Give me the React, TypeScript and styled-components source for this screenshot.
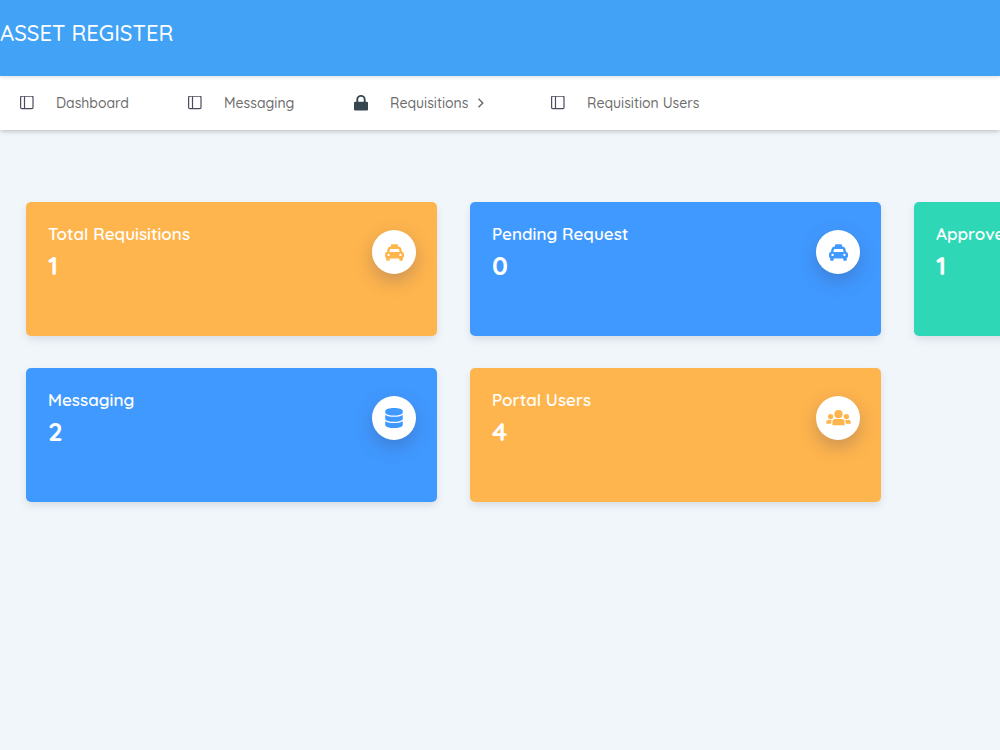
import React from "react";
import styled, { createGlobalStyle } from "styled-components";
import { FaTaxi, FaDatabase } from "react-icons/fa";

const GlobalStyle = createGlobalStyle`
  * { box-sizing: border-box; }
  body {
    margin: 0;
    background: #f1f6fb;
    font-family: Quicksand, Lato, sans-serif;
    font-weight: 500;
    overflow-x: hidden;
  }
`;

const Header = styled.header`
  position: relative;
  z-index: 1;
  height: 76px;
  padding-top: 18px;
  background: #42a3f6;
  color: #ffffff;
  box-shadow: 0 1px 4px rgba(0, 0, 0, 0.14);
`;

const Brand = styled.h1`
  margin: 0;
  font-size: 22px;
  line-height: 30px;
  font-weight: 500;
`;

const Nav = styled.nav`
  display: flex;
  align-items: center;
  height: 54px;
  padding-left: 20px;
  background: #ffffff;
  box-shadow: 0 1px 5px rgba(0, 0, 0, 0.25);
`;

const NavLink = styled.a<{ $width: number }>`
  display: flex;
  flex: none;
  align-items: center;
  width: ${(p) => p.$width}px;
  color: #6c6c6c;
  font-size: 14px;
  line-height: 20px;
  text-decoration: none;
`;

const NavIcon = styled.span`
  display: flex;
  width: 36px;
  color: #4d4c5e;
`;

const Caret = styled.span`
  display: flex;
  margin-left: 9px;
`;

const Cards = styled.main`
  display: grid;
  grid-template-columns: repeat(3, minmax(411px, 1fr));
  gap: 32px 33px;
  padding: 72px 26px;
`;

const Card = styled.section<{ $color: string }>`
  display: flex;
  justify-content: space-between;
  min-height: 134px;
  padding: 22px 21px 22px 22px;
  border-radius: 5px;
  background: ${(p) => p.$color};
  color: #ffffff;
  box-shadow: 0 4px 8px -1px rgba(60, 70, 90, 0.15);
`;

const CardTitle = styled.h2`
  margin: 0;
  font-size: 17px;
  line-height: 20px;
  font-weight: 600;
`;

const CardValue = styled.p`
  margin: 6px 0 0;
  font-size: 26px;
  line-height: 32px;
  font-weight: 700;
`;

const Badge = styled.span<{ $color: string }>`
  display: flex;
  align-items: center;
  justify-content: center;
  width: 44px;
  height: 44px;
  margin-top: 6px;
  border-radius: 50%;
  background: #ffffff;
  color: ${(p) => p.$color};
  box-shadow: 0 7px 18px rgba(62, 57, 107, 0.28);
`;

const PanelIcon = () => (
  <svg width="14" height="14" viewBox="0 0 14 14" fill="none" stroke="currentColor" strokeWidth="1.2" aria-hidden="true">
    <rect x="0.6" y="0.2" width="12.4" height="12.4" rx="1.2" />
    <path d="M4.5 0.2V12.6" />
  </svg>
);

const LockIcon = () => (
  <svg width="14" height="16" viewBox="0 0 14 16" aria-hidden="true">
    <path d="M3.3 8V4.6a3.7 3.7 0 0 1 7.4 0V8" fill="none" stroke="#35464f" strokeWidth="1.9" />
    <rect x="0" y="6.7" width="14" height="8.8" rx="1.3" fill="#35464f" />
  </svg>
);

const ChevronIcon = () => (
  <svg width="8" height="10" viewBox="0 0 8 10" fill="none" stroke="#686868" strokeWidth="1.4" aria-hidden="true">
    <path d="M1.5 0.8L5.8 5L1.5 9.2" />
  </svg>
);

const PeopleIcon = () => (
  <svg width="25" height="16" viewBox="0 0 25 16" fill="currentColor" aria-hidden="true">
    <circle cx="12.5" cy="4.2" r="4.1" />
    <circle cx="4.6" cy="6.6" r="2.7" />
    <circle cx="20.4" cy="6.6" r="2.7" />
    <path d="M6.4 15.2v-3.4c0-1.8 1-2.8 2.8-2.8h6.6c1.8 0 2.8 1 2.8 2.8v3.4z" />
    <path d="M0.3 13.8v-1.8c0-1.3.8-2 2-2h3.5c-.4.6-.5 1.2-.5 2v1.8zM24.7 13.8v-1.8c0-1.3-.8-2-2-2h-3.5c.4.6.5 1.2.5 2v1.8z" />
  </svg>
);

const ORANGE = "#ffb54d";
const BLUE = "#4099ff";
const GREEN = "#2ed8b6";

const links = [
  { label: "Dashboard", width: 168, icon: <PanelIcon /> },
  { label: "Messaging", width: 166, icon: <PanelIcon /> },
  { label: "Requisitions", width: 197, icon: <LockIcon />, caret: true },
  { label: "Requisition Users", width: 197, icon: <PanelIcon /> },
];

const cards = [
  { title: "Total Requisitions", value: 1, color: ORANGE, icon: <FaTaxi size={19} /> },
  { title: "Pending Request", value: 0, color: BLUE, icon: <FaTaxi size={19} /> },
  { title: "Approved Request", value: 1, color: GREEN, icon: <FaTaxi size={19} /> },
  { title: "Messaging", value: 2, color: BLUE, icon: <FaDatabase size={20} /> },
  { title: "Portal Users", value: 4, color: ORANGE, icon: <PeopleIcon /> },
];

export default function App() {
  return (
    <>
      <GlobalStyle />
      <Header>
        <Brand>ASSET REGISTER</Brand>
      </Header>
      <Nav>
        {links.map((link) => (
          <NavLink key={link.label} href="#" $width={link.width}>
            <NavIcon>{link.icon}</NavIcon>
            {link.label}
            {link.caret && (
              <Caret>
                <ChevronIcon />
              </Caret>
            )}
          </NavLink>
        ))}
      </Nav>
      <Cards>
        {cards.map((card) => (
          <Card key={card.title} $color={card.color}>
            <div>
              <CardTitle>{card.title}</CardTitle>
              <CardValue>{card.value}</CardValue>
            </div>
            <Badge $color={card.color}>{card.icon}</Badge>
          </Card>
        ))}
      </Cards>
    </>
  );
}
